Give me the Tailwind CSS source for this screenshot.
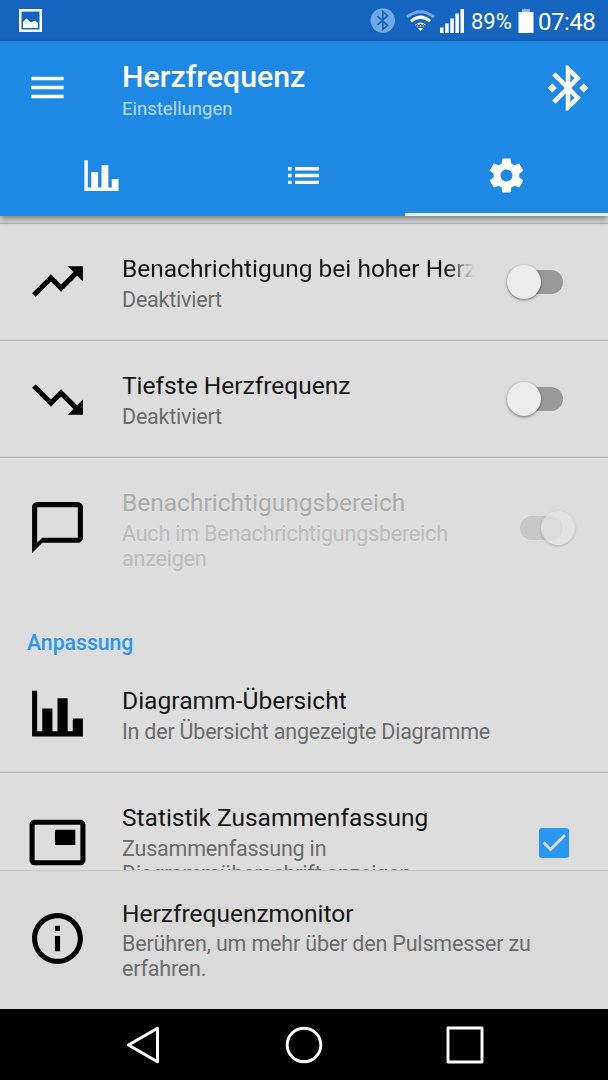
<!DOCTYPE html>
<html lang="de">
<head>
<meta charset="utf-8">
<title>Herzfrequenz</title>
<script src="https://cdn.jsdelivr.net/npm/@tailwindcss/browser@4"></script>
</head>
<body class="bg-black font-[Roboto,sans-serif]">
<div class="w-[608px] h-[1080px] flex flex-col overflow-hidden bg-[#dddddd]">

  <!-- Status bar -->
  <div class="h-[41px] shrink-0 bg-[#1565c0] flex items-center pl-[19px] text-white">
    <svg class="w-[23px] h-[23px]" viewBox="0 0 23 23"><path d="M1.25 1.25h20.5v20.5H1.25z" fill="none" stroke="#fff" stroke-width="2.5"/><path d="M4 19v-6l3.5-3.500 4.500 4 2-1 2-.8L19 14v5z" fill="#fff"/></svg>
    <svg class="w-[25px] h-[25px] ml-[328px]" viewBox="0 0 25 25"><circle cx="12.800" cy="12.500" r="12.200" fill="#6fa8e4"/><path d="M7.500 8l10 9.300-4.600 4V3.700l4.600 4-10 9.300" fill="none" stroke="#1565c0" stroke-width="1.700"/></svg>
    <svg class="w-[29px] h-[22px] ml-[11px]" viewBox="0 0 29 22"><path d="M1 7Q14.500-3.500 28 7" fill="none" stroke="#6fa8e4" stroke-width="3"/><path d="M5 11.200Q14.500 3 24 11.200" fill="none" stroke="#fff" stroke-width="3"/><path d="M9 15Q14.500 9.800 20 15l-2 1.500h-7z" fill="#fff"/><path d="M10 16.200l1.500-1.700 1.500 1.700 1.500-2 1.500 2 1.500-1.700 1.500 1.700" fill="none" stroke="#555" stroke-width="1.100"/><path d="M12 18l2.500 3.200L17 18z" fill="#fff"/></svg>
    <svg class="w-6 h-6 ml-[5px]" viewBox="0 0 24 24" fill="#fff"><path d="M0 18.500h3.500V24H0zM5.200 14.500h3.500V24H5.200zM10.300 9.500h3.500V24h-3.500zM15.400 4.500h3.500V24h-3.500zM20.500 0H24v24h-3.500z"/></svg>
    <span class="ml-[7px] w-[41px] text-[22px] leading-6 pt-[2px] whitespace-nowrap">89%</span>
    <svg class="w-[16px] h-[24px] ml-[6px]" viewBox="0 0 16 24"><path d="M4 0h8v3H4z" fill="#8bb8ea"/><path d="M.5 3h15v21H.5z" fill="#fff"/></svg>
    <span class="ml-[4px] text-[24px] leading-6 pt-[2px] tracking-[-0.5px] whitespace-nowrap">07:48</span>
  </div>

  <!-- App bar -->
  <header class="h-[175px] shrink-0 bg-[#1e88e5] flex flex-col relative z-10 shadow-[0_3px_7px_rgba(0,0,0,0.45)]">
    <div class="h-[94px] flex items-center pl-[26px] pr-[13px] pb-px">
      <svg class="w-[43px] h-[43px] mb-px" viewBox="0 0 24 24" fill="#fff"><path d="M3 18h18v-2H3v2zm0-5h18v-2H3v2zm0-7v2h18V6H3z"/></svg>
      <div class="ml-[53px] mt-[4px] grow text-white">
        <h1 class="text-[30.3px] leading-[35px] font-medium">Herzfrequenz</h1>
        <p class="text-[18.5px] leading-[22px] mt-[4px] text-white/70">Einstellungen</p>
      </div>
      <svg class="w-[54px] h-[54px]" viewBox="0 0 24 24" fill="#fff"><path d="M7 12l-2-2-2 2 2 2 2-2zm10.710-4.290L12 2h-1v7.590L6.410 5 5 6.410 10.590 12 5 17.590 6.410 19 11 14.410V22h1l5.710-5.710-4.300-4.290 4.300-4.290zM13 5.830l1.880 1.880L13 9.590V5.830zm1.880 10.460L13 18.170v-3.760l1.880 1.880zM19 10l-2 2 2 2 2-2-2-2z"/></svg>
    </div>
    <nav class="h-[81px] grid grid-cols-3">
      <div class="flex items-center justify-center"><svg class="w-[41px] h-[41px]" viewBox="0 0 24 24" fill="#fff"><path d="M22 21H2V3h2v16h2v-9h4v9h2V6h4v13h2v-5h4v7z"/></svg></div>
      <div class="flex items-center justify-center"><svg class="w-[41px] h-[41px]" viewBox="0 0 24 24" fill="#fff"><path d="M3 13h2v-2H3v2zm0 4h2v-2H3v2zm0-8h2V7H3v2zm4 4h14v-2H7v2zm0 4h14v-2H7v2zM7 7v2h14V7H7z"/></svg></div>
      <div class="flex items-center justify-center border-b-[3px] pt-[3px] border-[#e3effb]"><svg class="w-[41px] h-[41px]" viewBox="0 0 24 24" fill="#fff"><path d="M19.430 12.980c.04-.32.07-.64.07-.98s-.03-.66-.07-.98l2.110-1.650c.19-.15.24-.42.12-.64l-2-3.460c-.12-.22-.39-.3-.61-.22l-2.490 1c-.52-.4-1.080-.73-1.690-.98l-.38-2.650C14.460 2.180 14.250 2 14 2h-4c-.25 0-.46.18-.49.42l-.38 2.650c-.61.25-1.170.59-1.690.98l-2.490-1c-.23-.09-.49 0-.61.22l-2 3.460c-.13.22-.07.49.12.64l2.110 1.650c-.04.32-.07.65-.07.98s.03.66.07.98l-2.110 1.650c-.19.15-.24.42-.12.64l2 3.460c.12.22.39.3.61.22l2.490-1c.52.4 1.080.73 1.690.98l.38 2.650c.03.24.24.42.49.42h4c.25 0 .46-.18.49-.42l.38-2.650c.61-.25 1.170-.59 1.690-.98l2.490 1c.23.09.49 0 .61-.22l2-3.460c.12-.22.07-.49-.12-.64l-2.110-1.650zM12 15.500c-1.930 0-3.500-1.570-3.500-3.500s1.570-3.500 3.500-3.500 3.500 1.570 3.500 3.500-1.570 3.500-3.500 3.500z"/></svg></div>
    </nav>
  </header>

  <!-- Settings list -->
  <main class="h-[654px] shrink-0 overflow-hidden pt-[7px]">
    <section class="h-[117px] border-t border-[#b9b9b9] shadow-[0_-1px_0_#d0d0d0] flex items-center pl-[27px]">
      <svg class="w-[61px] h-[61px] mb-px" viewBox="0 0 24 24"><path d="M16 6l2.290 2.290-4.880 4.880-4-4L2 16.590 3.410 18l6-6 4 4 6.300-6.290L22 12V6z"/></svg>
      <div class="ml-[34px] mt-[2px] w-[352px]">
        <h2 class="text-[24.5px] leading-7 text-[#151515] whitespace-nowrap overflow-hidden mask-r-from-[92%]">Benachrichtigung bei hoher Herzfrequenz</h2>
        <p class="text-[21.5px] tracking-[-0.22px] leading-[25px] mt-[4px] text-[#6c6c6c]">Deaktiviert</p>
      </div>
      <div class="ml-[46px] w-[43px] h-6 rounded-full bg-[#9a9a9a] relative"><div class="absolute -left-[13px] -top-[5px] w-[34px] h-[34px] rounded-full bg-[#ececec] shadow-[0_1px_3px_rgba(0,0,0,0.5)]"></div></div>
    </section>
    <section class="h-[117px] border-t border-[#b9b9b9] shadow-[0_-1px_0_#d0d0d0] flex items-center pl-[27px]">
      <svg class="w-[61px] h-[61px]" viewBox="0 0 24 24"><path d="M16 18l2.290-2.290-4.880-4.880-4 4L2 7.410 3.410 6l6 6 4-4 6.300 6.290L22 12v6z"/></svg>
      <div class="ml-[34px] mt-[2px] w-[352px]">
        <h2 class="text-[24.5px] leading-7 text-[#151515]">Tiefste Herzfrequenz</h2>
        <p class="text-[21.5px] tracking-[-0.22px] leading-[25px] mt-[4px] text-[#6c6c6c]">Deaktiviert</p>
      </div>
      <div class="ml-[46px] w-[43px] h-6 rounded-full bg-[#9a9a9a] relative"><div class="absolute -left-[13px] -top-[5px] w-[34px] h-[34px] rounded-full bg-[#ececec] shadow-[0_1px_3px_rgba(0,0,0,0.5)]"></div></div>
    </section>
    <section class="h-[140px] border-t border-[#b9b9b9] shadow-[0_-1px_0_#d0d0d0] flex items-center pl-[27px]">
      <svg class="w-[61px] h-[61px]" viewBox="0 0 24 24"><path d="M20 2H4c-1.100 0-2 .9-2 2v18l4-4h14c1.100 0 2-.9 2-2V4c0-1.100-.9-2-2-2zm0 14H6l-2 2V4h16v12z"/></svg>
      <div class="ml-[34px] mt-[4px] w-[352px]">
        <h2 class="text-[24.5px] leading-7 text-[#adadad]">Benachrichtigungsbereich</h2>
        <p class="text-[21.5px] tracking-[-0.2px] leading-[25px] mt-[4px] text-[#bebebe]">Auch im Benachrichtigungsbereich anzeigen</p>
      </div>
      <div class="ml-[46px] w-[43px] h-6 rounded-full bg-[#c7c7c7] relative"><div class="absolute left-[21px] -top-[5px] w-[34px] h-[34px] rounded-full bg-[#e8e8e8]/60 shadow-[0_1px_3px_rgba(0,0,0,0.18)]"></div></div>
    </section>
    <h3 class="h-[58px] pt-[33px] pl-[27px] text-[21.2px] leading-[25px] font-medium text-[#2a96f3]">Anpassung</h3>
    <section class="h-[117px] flex items-center pl-[27px]">
      <svg class="w-[61px] h-[61px]" viewBox="0 0 24 24"><path d="M22 21H2V3h2v16h2v-9h4v9h2V6h4v13h2v-5h4v7z"/></svg>
      <div class="ml-[34px] mt-[4px]">
        <h2 class="text-[24.6px] leading-7 text-[#151515]">Diagramm-Übersicht</h2>
        <p class="text-[21.5px] tracking-[-0.23px] leading-[25px] mt-[4px] text-[#6c6c6c]">In der Übersicht angezeigte Diagramme</p>
      </div>
    </section>
    <section class="h-[140px] border-t border-[#b9b9b9] shadow-[0_-1px_0_#d0d0d0] flex items-center pl-[27px]">
      <svg class="w-[61px] h-[61px]" viewBox="0 0 24 24"><path d="M19 7h-8v6h8V7zm2-4H3c-1.100 0-2 .9-2 2v14c0 1.100.9 1.980 2 1.980h18c1.100 0 2-.88 2-1.980V5c0-1.100-.9-2-2-2zm0 16.010H3V4.980h18v14.030z"/></svg>
      <div class="ml-[34px] mt-[4px] w-[352px]">
        <h2 class="text-[24.5px] leading-7 text-[#151515]">Statistik Zusammenfassung</h2>
        <p class="text-[21.5px] tracking-[-0.2px] leading-[25px] mt-[4px] text-[#6c6c6c]">Zusammenfassung in<br>Diagrammüberschrift anzeigen</p>
      </div>
      <svg class="ml-[65px] w-[30px] h-[30px]" viewBox="0 0 30 30"><rect width="30" height="30" rx="3" fill="#2a96f3"/><path d="M4.500 14.500l7 7L26 7" fill="none" stroke="#dddddd" stroke-width="2.900"/></svg>
    </section>
  </main>

  <!-- Footer entry -->
  <footer class="h-[139px] shrink-0 border-t border-[#c4c4c4] bg-[#dadada] flex items-center pl-[27px] pb-[3px]">
    <svg class="w-[61px] h-[61px]" viewBox="0 0 24 24"><path d="M11 17h2v-6h-2v6zm1-15C6.480 2 2 6.480 2 12s4.480 10 10 10 10-4.480 10-10S17.520 2 12 2zm0 18c-4.410 0-8-3.590-8-8s3.590-8 8-8 8 3.590 8 8-3.590 8-8 8zM11 9h2V7h-2v2z"/></svg>
    <div class="ml-[34px] mt-[4px] w-[430px]">
      <h2 class="text-[24.5px] leading-7 text-[#151515]">Herzfrequenzmonitor</h2>
      <p class="text-[21.5px] tracking-[-0.18px] leading-[24.5px] mt-[4px] text-[#6c6c6c]">Berühren, um mehr über den Pulsmesser zu erfahren.</p>
    </div>
  </footer>

  <!-- System navigation -->
  <div class="h-[71px] shrink-0 bg-black flex items-center pl-[126px]">
    <svg class="w-[36px] h-[40px]" viewBox="0 0 36 40"><path d="M2.500 20L31.500 3.200v33.600z" fill="none" stroke="#fff" stroke-width="3" stroke-linejoin="round"/></svg>
    <svg class="w-[40px] h-[40px] ml-[122px]" viewBox="0 0 40 40"><circle cx="20" cy="20" r="16.800" fill="none" stroke="#fff" stroke-width="2.900"/></svg>
    <svg class="w-[40px] h-[40px] ml-[121px]" viewBox="0 0 40 40"><path d="M3 3h34v34H3z" fill="none" stroke="#fff" stroke-width="2.900" stroke-linejoin="round"/></svg>
  </div>
</div>
</body>
</html>
